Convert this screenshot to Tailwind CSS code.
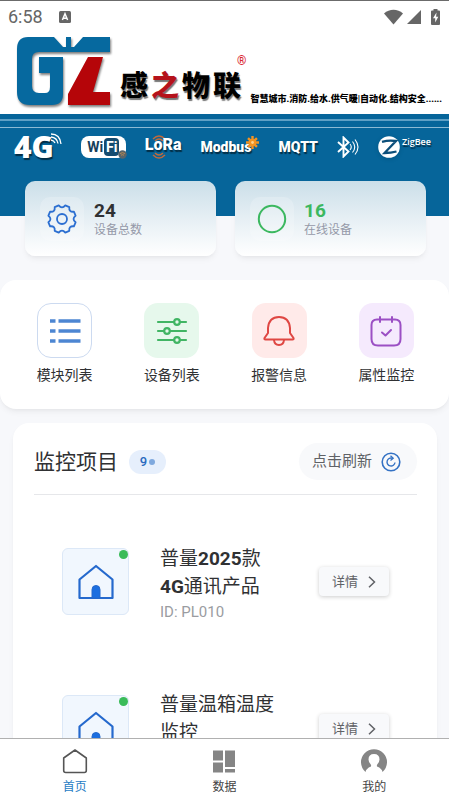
<!DOCTYPE html>
<html lang="zh-CN">
<head>
<meta charset="utf-8">
<meta name="viewport" content="width=device-width, initial-scale=1">
<title>感之物联</title>
<script src="https://cdn.jsdelivr.net/npm/@tailwindcss/browser@4"></script>
</head>
<body class="flex h-screen flex-col overflow-hidden bg-[#f7f8fb] font-[Roboto,'Noto_Sans_CJK_SC',sans-serif] text-[#303133]">
<main class="min-h-0 flex-1 overflow-hidden">
  <header class="bg-white">
    <!-- status bar -->
    <div class="flex h-8 items-center border-t border-[#6b6b6b] pr-2 pl-2 text-[#666]">
      <span class="text-[18px] leading-8">6:58</span>
      <svg class="ml-4 h-3 w-3" viewBox="0 0 12 12"><rect width="12" height="12" rx="1.5" fill="#666"/><path d="M3.4 9 6 2.8 8.6 9M4.4 7.2h3.2" fill="none" stroke="#fff" stroke-width="1.5"/></svg>
      <svg class="ml-auto h-4 w-[19px]" viewBox="0 0 19 16"><path d="M0 4.4C5.500-.4 13.500-.4 19 4.400L9.500 15.500Z" fill="#666"/></svg>
      <svg class="ml-1 h-4 w-[14px]" viewBox="0 0 14 16"><path d="M14 1v14H0Z" fill="#666"/></svg>
      <svg class="mr-px ml-[10px] h-4 w-[9px]" viewBox="0 0 9 16"><path d="M2.500 0h4v1.500H8q1 0 1 1V15q0 1-1 1H1q-1 0-1-1V2.500q0-1 1-1h1.500Z" fill="#666"/><path d="M5.500 3.500 2 9.300h2.200V13.500L7.300 7.700H5.100Z" fill="#fff"/></svg>
    </div>
    <!-- brand -->
    <div class="flex h-[82px] items-start pl-[17px]">
      <svg class="mt-1 h-[72px] w-[95px] shrink-0 drop-shadow-[1px_2px_1px_rgba(0,0,0,0.5)]" viewBox="0 0 95 72" role="img" aria-label="GZ">
        <path d="M11 1H37L46 11H49V1H54V11H57L66 1H93V16H22Q15 16 15 23V50Q15 57 22 57H28Q33 57 33 51V37H22V21H46V58Q46 69 35 69H13Q0 69 0 56V13Q0 1 11 1Z" fill="#06699f"/>
        <path d="M71 21H86L76 56H93V69H51V58Z" fill="#b50509"/>
      </svg>
      <h1 class="mt-8 ml-2 flex gap-[3px] font-['Noto_Sans_CJK_SC',sans-serif] text-[28px] leading-10 font-black text-black text-shadow-[1px_2px_1px_#777]"><span>感</span><span class="text-[#b5121b]">之</span><span>物</span><span>联</span></h1>
      <span class="mt-[23px] -ml-1 text-[12px] leading-3 font-bold text-[#d92632]">®</span>
      <p class="mt-[59px] ml-1 font-[Roboto,'Noto_Sans_CJK_SC',sans-serif] text-[9px] leading-4 font-black whitespace-nowrap text-black">智慧城市.消防.给水.供气暖|自动化.结构安全......</p>
    </div>
    <!-- protocols -->
    <div class="h-[102px] bg-[#06659a]">
      <div class="h-[7px] border-b-2 border-[#5fa0c5]"></div>
      <div class="h-[7px] border-b border-[#8cbad4]"></div>
      <div class="flex h-[38px] items-center justify-between pr-[18px] pl-[14px] leading-none font-black text-white text-shadow-[1px_2px_1px_rgba(0,0,0,0.55)]">
        <span class="flex items-start"><span class="font-['Open_Sans',Roboto] text-[30px] leading-7 font-extrabold">4G</span>
          <svg class="-ml-1 h-[12px] w-[12px]" viewBox="0 0 12 12" fill="none" stroke="#fff" stroke-width="1.300"><path d="M1 1Q10 1 11 11M1 4Q7 4.500 8 10.500M1 7Q4 7.500 5 10"/></svg></span>
        <span class="relative flex h-[22px] w-[45px] items-center justify-center gap-px rounded-[8px] bg-white text-[14px] font-bold text-[#173f5b] text-shadow-none">
          <span>Wi</span><span class="rounded-[4px] bg-[#154c70] px-[2px] py-[2px] text-white">Fi</span>
          <svg class="absolute -right-px -bottom-px h-[9px] w-[9px]" viewBox="0 0 9 9"><circle cx="4.500" cy="4.500" r="4.200" fill="#58656b"/><path d="M2 3.600q2.500-2 5 0M3 5.200q1.500-1 3 0" stroke="#b98850" fill="none"/></svg>
        </span>
        <span class="relative flex h-6 items-center">
          <svg class="absolute top-0 left-[7px] h-6 w-[14px]" viewBox="0 0 14 24" fill="none" stroke="#c06a3c" stroke-width="1.500"><path d="M1 4Q7-2 13 4M3 6Q7 2 11 6M1 20Q7 26 13 20M3 18Q7 22 11 18"/></svg>
          <span class="relative -mt-1 text-[16px]">LoRa</span></span>
        <span class="relative pr-2 text-[14px]">Modbus
          <svg class="absolute -top-1 right-0 h-[13px] w-[13px]" viewBox="0 0 14 14"><path d="M7 0v14M0 7h14M2.200 2.200l9.600 9.600M11.800 2.200 2.200 11.800" stroke="#f39322" stroke-width="2.600"/><circle cx="7" cy="7" r="4" fill="#f39322"/><circle cx="7" cy="7" r="1.500" fill="#ffd28a"/></svg></span>
        <span class="text-[14px]">MQTT</span>
        <svg class="h-[22px] w-[22px]" viewBox="0 0 22 22" fill="none" stroke="#fff" role="img" aria-label="Bluetooth"><path d="M1 6 11.500 15.500 6.500 20.500V1.500L11.500 6.500 1 16" stroke-width="1.900"/><path d="M13 8q2.500 3 0 6M15.500 5.500q4.500 5.500 0 11M18 3.500q6 7.500 0 15" stroke-width="1.100"/></svg>
        <span class="flex items-start gap-[2px]"><svg class="h-[22px] w-[22px] drop-shadow-sm" viewBox="0 0 22 22"><circle cx="11" cy="11" r="10.800" fill="#fff"/><path d="M4 5.800Q11 3.800 18 5L6.500 17Q13 17 18.500 15.500" fill="none" stroke="#0c4f7a" stroke-width="2.300"/></svg><span class="mt-px font-['Open_Sans',Roboto] text-[9px] font-semibold">ZigBee</span></span>
      </div>
    </div>
  </header>

  <section class="relative -mt-[35px] grid grid-cols-2 gap-[19px] pr-[23px] pl-[25px]">
    <div class="flex h-[75px] items-center rounded-[10px] bg-linear-to-b from-[#cbdfe9] via-[#e6eff4] to-white pl-[15px] shadow-md shadow-black/5">
      <span class="flex h-11 w-11 items-center justify-center rounded-[10px] bg-white/20">
        <svg class="h-[30px] w-[30px]" viewBox="0 0 30 30" fill="none" stroke="#2c6fd1" stroke-width="1.800" stroke-linejoin="round"><path d="M11.700 1.400Q15 5.500 18.300 1.400L22.300 3.100Q21.700 8.300 26.900 7.700L28.600 11.700Q24.500 15 28.600 18.300L26.900 22.300Q21.700 21.700 22.300 26.900L18.300 28.600Q15 24.500 11.700 28.600L7.700 26.900Q8.300 21.700 3.100 22.300L1.400 18.300Q5.500 15 1.400 11.700L3.100 7.700Q8.300 8.300 7.700 3.100Z"/><circle cx="15" cy="15" r="5"/></svg>
      </span>
      <p class="ml-[10px] pt-[3px]"><strong class="block text-[19px] leading-5 font-bold">24</strong><span class="block text-[12px] leading-[18px] text-[#9599a8]">设备总数</span></p>
    </div>
    <div class="flex h-[75px] items-center rounded-[10px] bg-linear-to-b from-[#cbdfe9] via-[#e6eff4] to-white pl-[15px] shadow-md shadow-black/5">
      <span class="flex h-11 w-11 items-center justify-center rounded-[10px] bg-white/20">
        <svg class="h-[30px] w-[30px]" viewBox="0 0 30 30"><circle cx="15" cy="15" r="13.200" fill="none" stroke="#3cb860" stroke-width="2"/></svg>
      </span>
      <p class="ml-[10px] pt-[3px]"><strong class="block text-[19px] leading-5 font-bold text-[#3cb860]">16</strong><span class="block text-[12px] leading-[18px] text-[#9599a8]">在线设备</span></p>
    </div>
  </section>

  <section class="mt-6 grid h-[129px] grid-cols-4 rounded-2xl bg-white pt-[23px] pr-[9px] pl-[11px] text-[14px] leading-5 shadow-md shadow-black/5">
    <a href="#" class="flex flex-col items-center gap-[7px]">
      <span class="flex h-[55px] w-[55px] items-center justify-center rounded-[14px] border border-[#ccdaf0] bg-white"><svg class="h-8 w-8" viewBox="0 0 32 32" stroke="#4d86d2" stroke-width="3.400"><path d="M1 6h5.500M1 16h5.500M1 26h5.500M9.500 6H31.500M9.500 16H31.500M9.500 26H31.500"/></svg></span>模块列表</a>
    <a href="#" class="flex flex-col items-center gap-[7px]">
      <span class="flex h-[55px] w-[55px] items-center justify-center rounded-[14px] bg-[#e6f8ec]"><svg class="h-8 w-8" viewBox="0 0 32 32" fill="#e6f8ec" stroke="#41b564" stroke-width="2.200" stroke-linecap="round"><path d="M2 7H30M2 16H30M2 25H30"/><circle cx="21" cy="7" r="2.800"/><circle cx="11" cy="16" r="2.800"/><circle cx="21" cy="25" r="2.800"/></svg></span>设备列表</a>
    <a href="#" class="flex flex-col items-center gap-[7px]">
      <span class="flex h-[55px] w-[55px] items-center justify-center rounded-[14px] bg-[#ffeae9]"><svg class="h-8 w-8" viewBox="0 0 32 32" fill="none" stroke="#df4743" stroke-width="2" stroke-linejoin="round"><path d="M5 18V13Q6 2 16 2Q26 2 27 13V18L30.500 23Q31 24.500 29.500 24.500H2.500Q1 24.500 1.500 23Z"/><path d="M11 25Q11.500 30 16 30Q20.500 30 21 25"/></svg></span>报警信息</a>
    <a href="#" class="flex flex-col items-center gap-[7px]">
      <span class="flex h-[55px] w-[55px] items-center justify-center rounded-[14px] bg-[#f5eafd]"><svg class="h-8 w-8" viewBox="0 0 32 32" fill="none" stroke="#9b4fc4" stroke-width="2" stroke-linecap="round" stroke-linejoin="round"><path d="M7 4.500H25Q30.500 4.500 30.500 10V24Q30.500 30.500 24 30.500H8Q1.500 30.500 1.500 24V10Q1.500 4.500 7 4.500ZM10 2V7M22 2V7M12 17.500 15.500 20.500 21 15"/></svg></span>属性监控</a>
  </section>

  <section class="mr-3 ml-[13px] mt-[14px] rounded-2xl bg-white pt-5 pr-5 pl-[21px] shadow-md shadow-black/5">
    <div class="flex h-[52px] items-start border-b border-[#e6e7ea]">
      <h2 class="text-[21px] leading-[38px]">监控项目</h2>
      <span class="mt-[7px] ml-[11px] flex h-6 w-[37px] items-center justify-center gap-[2px] rounded-full bg-[#e6effc] text-[13px] font-medium text-[#2a6abf]">9<i class="h-[6px] w-[6px] rounded-full bg-[#7fa9de]"></i></span>
      <button type="button" class="ml-auto flex h-[37px] items-center gap-[9px] rounded-full bg-[#f8f9fb] pr-4 pl-[13px] text-[15px] text-[#606266]">点击刷新
        <svg class="h-5 w-5" viewBox="0 0 20 20" fill="none" stroke="#3472c4"><circle cx="10" cy="10" r="8.800" stroke-width="1.600"/><path d="M11.500 6.300A4 4 0 1 0 14 10.500" stroke-width="1.400"/><path d="M9.500 3.800 12.200 6.300 9.500 8.600" stroke-width="1.300"/></svg></button>
    </div>
    <ul class="mt-[13px]">
      <li class="flex h-[147px] items-center px-7">
        <div class="relative flex h-[67px] w-[67px] shrink-0 items-center justify-center rounded-[6px] border border-[#dce8f7] bg-[#f1f7fe]">
          <svg class="h-9 w-9" viewBox="0 0 36 36" fill="none" stroke="#2569cd" stroke-width="2.200" stroke-linejoin="round"><path d="M18 2 34.500 15.500V34H1.500V15.500Z"/><path d="M14 34V25.500Q14 21.500 18 21.500Q22 21.500 22 25.500V34Z" fill="#1b6ee0" stroke-width="1"/></svg>
          <i class="absolute top-px right-0 h-[9px] w-[9px] rounded-full bg-[#3abb59]"></i>
        </div>
        <div class="ml-[31px] w-[118px] pt-1"><h3 class="text-[19px] leading-7 font-normal">普量<b>2025</b>款<b>4G</b>通讯产品</h3><p class="text-[15px] leading-[22px] text-[#9a9ca1]">ID: PL010</p></div>
        <button type="button" class="ml-auto flex h-[29px] w-[70px] items-center justify-center gap-[10px] rounded-[4px] bg-[#f8f9fb] text-[13px] text-[#606266] shadow-[0_1px_4px_rgba(0,0,0,0.2)]">详情
          <svg class="h-3 w-2" viewBox="0 0 8 12" fill="none" stroke="#606266" stroke-width="1.500"><path d="M1 .700 6.500 6 1 11.300"/></svg></button>
      </li>
      <li class="flex h-[147px] items-center px-7">
        <div class="relative flex h-[67px] w-[67px] shrink-0 items-center justify-center rounded-[6px] border border-[#dce8f7] bg-[#f1f7fe]">
          <svg class="h-9 w-9" viewBox="0 0 36 36" fill="none" stroke="#2569cd" stroke-width="2.200" stroke-linejoin="round"><path d="M18 2 34.500 15.500V34H1.500V15.500Z"/><path d="M14 34V25.500Q14 21.500 18 21.500Q22 21.500 22 25.500V34Z" fill="#1b6ee0" stroke-width="1"/></svg>
          <i class="absolute top-px right-0 h-[9px] w-[9px] rounded-full bg-[#3abb59]"></i>
        </div>
        <div class="ml-[31px] w-[118px] pt-[3px]"><h3 class="text-[19px] leading-7 font-normal">普量温箱温度监控</h3><p class="h-[22px]"></p></div>
        <button type="button" class="ml-auto flex h-[29px] w-[70px] items-center justify-center gap-[10px] rounded-[4px] bg-[#f8f9fb] text-[13px] text-[#606266] shadow-[0_1px_4px_rgba(0,0,0,0.2)]">详情
          <svg class="h-3 w-2" viewBox="0 0 8 12" fill="none" stroke="#606266" stroke-width="1.500"><path d="M1 .700 6.500 6 1 11.300"/></svg></button>
      </li>
    </ul>
  </section>
</main>

<nav class="relative grid h-[62px] shrink-0 grid-cols-3 border-t border-[#b0b0b0] bg-white pt-[9px] text-[12px] leading-4 text-[#444]">
  <a href="#" class="flex flex-col items-center gap-[3px] text-[#1f7cc4]"><svg class="h-7 w-7" viewBox="0 0 28 28" fill="none" stroke="#555" stroke-width="1.600" stroke-linejoin="round"><path d="M14 2 25.300 10V22.500Q25.300 24.500 23.300 24.500H4.700Q2.700 24.500 2.700 22.500V10Z"/></svg>首页</a>
  <a href="#" class="flex flex-col items-center gap-[3px]"><svg class="h-7 w-7" viewBox="0 0 28 28" fill="#858585"><path d="M3 2.500H13V12.500H3ZM3 14.500H13V24.500H3ZM15 2.500H25V19H15ZM15 21H25V24.500H15Z"/></svg>数据</a>
  <a href="#" class="flex flex-col items-center gap-[3px]"><svg class="h-7 w-7" viewBox="0 0 28 28"><path d="M5.500 24A13 13 0 1 1 22.500 24Q22 20.500 17 18.500Q16.500 17.500 17.500 16Q19.500 14 19.500 11.500Q19.500 6 14 6Q8.500 6 8.500 11.500Q8.500 14 10.500 16Q11.500 17.500 11 18.500Q6 20.500 5.500 24Z" fill="#858585"/></svg>我的</a>
</nav>
</body>
</html>
